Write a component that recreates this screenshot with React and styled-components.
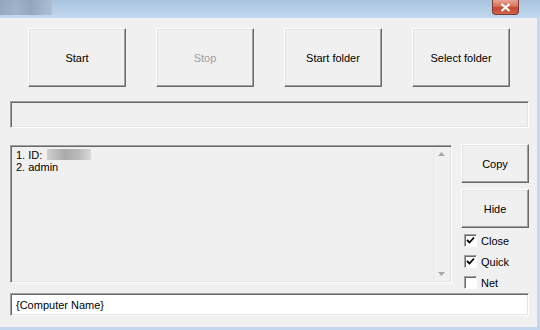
import React, { useState } from 'react';
import styled, { createGlobalStyle } from 'styled-components';

const GlobalStyle = createGlobalStyle`
  html, body {
    margin: 0;
    padding: 0;
    background: #f0f0f0;
  }
  body {
    font-family: "Liberation Sans", Arial, sans-serif;
    font-size: 11px;
    color: #000;
  }
`;

const Window = styled.div`
  width: 540px;
  height: 330px;
  display: flex;
  flex-direction: column;
  background: #f0f0f0;
  overflow: hidden;
`;

const TitleBar = styled.div`
  height: 18px;
  flex: none;
  display: flex;
  align-items: flex-start;
  justify-content: space-between;
  background: linear-gradient(to bottom, #a9c3df 0%, #b8cfe8 60%, #c3d8ee 100%);
`;

const BlurTitle = styled.div`
  width: 52px;
  height: 15px;
  background: linear-gradient(to right, #8d9fb6 0%, #9aacc2 30%, #8c9eb4 60%, #a8bad0 100%);
  opacity: 0.8;
`;

const CloseButton = styled.div`
  width: 27px;
  height: 15px;
  margin-right: 21px;
  box-sizing: border-box;
  border: 1px solid #7a3a33;
  border-top: none;
  border-radius: 0 0 4px 4px;
  background: linear-gradient(to bottom, #e8a493 0%, #d7705c 45%, #c4462f 55%, #d2644c 100%);
  display: flex;
  align-items: center;
  justify-content: center;
`;

const Body = styled.div`
  flex: 1;
  display: flex;
  flex-direction: column;
  padding: 10px 8px 11px 10px;
  border-right: 3px solid #c3d8ee;
  border-bottom: 3px solid #c3d8ee;
`;

const ButtonRow = styled.div`
  display: flex;
  gap: 30px;
  padding-left: 18px;
  height: 59px;
`;

const Button = styled.button`
  flex: none;
  width: ${(p) => p.width || 98}px;
  height: ${(p) => p.height || 59}px;
  box-sizing: border-box;
  background: #f0f0f0;
  font-family: inherit;
  font-size: 11px;
  color: ${(p) => (p.disabled ? '#a0a0a0' : '#000')};
  border: 1px solid;
  border-color: #ffffff #696969 #696969 #ffffff;
  box-shadow: inset -1px -1px 0 #a0a0a0, inset 1px 1px 0 #e3e3e3;
  padding: 0;
  cursor: default;
`;

const Sunken = styled.div`
  box-sizing: border-box;
  border: 1px solid;
  border-color: #a0a0a0 #ffffff #ffffff #a0a0a0;
  box-shadow: inset 1px 1px 0 #696969, inset -1px -1px 0 #e3e3e3;
  background: ${(p) => p.bg || '#f0f0f0'};
`;

const Progress = styled(Sunken)`
  height: 27px;
  margin-top: 14px;
`;

const Middle = styled.div`
  display: flex;
  gap: 9px;
  margin-top: 17px;
  height: 138px;
`;

const ListBox = styled(Sunken)`
  flex: 1;
  display: flex;
  padding: 2px;
`;

const ListItems = styled.div`
  flex: 1;
  padding: 1px 3px;
  line-height: 12px;
  color: #000;
`;

const Blur = styled.span`
  display: inline-block;
  width: 44px;
  height: 11px;
  vertical-align: -1px;
  margin-left: 2px;
  background: linear-gradient(to right, #cfcfcf, #aaaaaa 40%, #b8b8b8 70%, #d8d8d8);
`;

const ScrollBar = styled.div`
  width: 15px;
  display: flex;
  flex-direction: column;
  justify-content: space-between;
  align-items: center;
  border-left: 1px solid #e8e8e8;
  padding: 4px 0;
`;

const Side = styled.div`
  width: 68px;
  display: flex;
  flex-direction: column;
  gap: 6px;
  margin-top: -1px;
`;

const Checks = styled.div`
  flex: none;
  display: flex;
  flex-direction: column;
  gap: 8px;
  padding-left: 3px;
`;

const CheckRow = styled.label`
  display: flex;
  align-items: center;
  gap: 4px;
  height: 13px;
  color: #000;
`;

const Box = styled.span`
  width: 13px;
  height: 13px;
  box-sizing: border-box;
  border: 1px solid;
  border-color: #a0a0a0 #fff #fff #a0a0a0;
  box-shadow: inset 1px 1px 0 #696969;
  background: #fff;
  display: flex;
  align-items: center;
  justify-content: center;
`;

const NameField = styled(Sunken)`
  height: 23px;
  margin-top: 10px;
  display: flex;
  align-items: center;
  padding-left: 5px;
`;

const Arrow = ({ up }) => (
  <svg width="7" height="4" viewBox="0 0 7 4">
    <path d={up ? 'M0 4 L3.5 0 L7 4 Z' : 'M0 0 L3.5 4 L7 0 Z'} fill="#a8a8a8" />
  </svg>
);

const Check = ({ label, initial }) => {
  const [on, setOn] = useState(initial);
  return (
    <CheckRow onClick={() => setOn(!on)}>
      <Box>
        {on && (
          <svg width="9" height="9" viewBox="0 0 9 9">
            <path d="M1 4 L3.5 6.5 L8 1.5" stroke="#000" strokeWidth="1.8" fill="none" />
          </svg>
        )}
      </Box>
      {label}
    </CheckRow>
  );
};

export default function App() {
  return (
    <Window>
      <GlobalStyle />
      <TitleBar>
        <BlurTitle />
        <CloseButton>
          <svg width="11" height="9" viewBox="0 0 11 9">
            <path d="M1.5 1 L9.5 8 M9.5 1 L1.5 8" stroke="#ffffff" strokeWidth="2.2" />
          </svg>
        </CloseButton>
      </TitleBar>
      <Body>
        <ButtonRow>
          <Button>Start</Button>
          <Button disabled>Stop</Button>
          <Button>Start folder</Button>
          <Button>Select folder</Button>
        </ButtonRow>
        <Progress />
        <Middle>
          <ListBox>
            <ListItems>
              <div>1. ID: <Blur /></div>
              <div>2. admin</div>
            </ListItems>
            <ScrollBar>
              <Arrow up />
              <Arrow />
            </ScrollBar>
          </ListBox>
          <Side>
            <Button width={68} height={39}>Copy</Button>
            <Button width={68} height={39}>Hide</Button>
            <Checks>
              <Check label="Close" initial />
              <Check label="Quick" initial />
              <Check label="Net" initial={false} />
            </Checks>
          </Side>
        </Middle>
        <NameField bg="#ffffff">{'{Computer Name}'}</NameField>
      </Body>
    </Window>
  );
}
